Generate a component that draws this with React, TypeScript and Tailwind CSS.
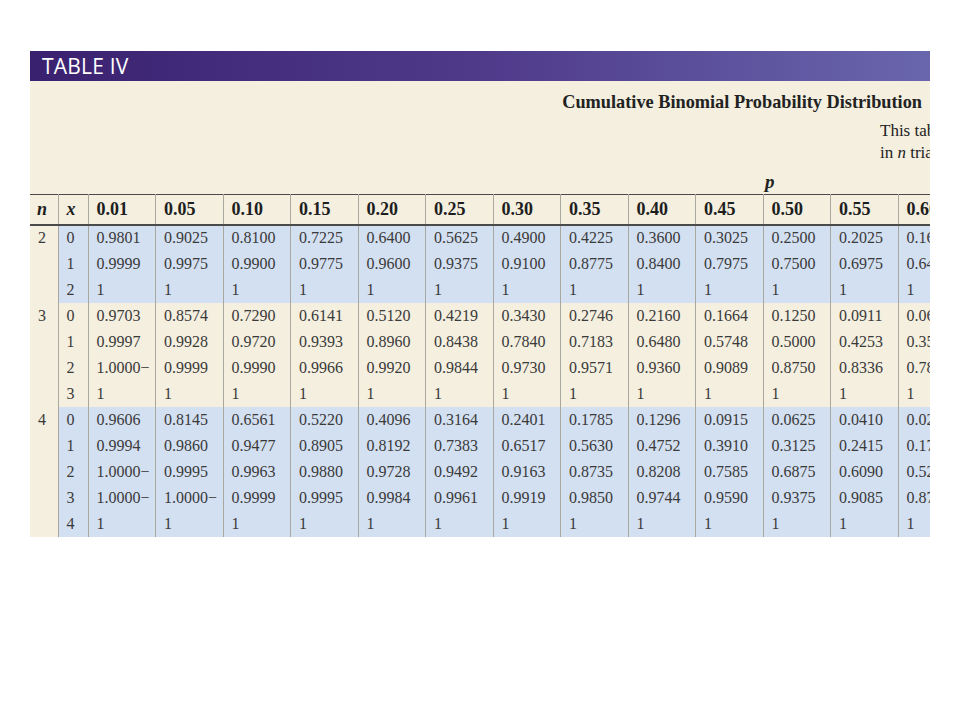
const P = ["0.01", "0.05", "0.10", "0.15", "0.20", "0.25", "0.30", "0.35", "0.40", "0.45", "0.50", "0.55", "0.60"];

type Group = { n: number; rows: string[][] };

const GROUPS: Group[] = [
  {
    n: 2,
    rows: [
      ["0.9801", "0.9025", "0.8100", "0.7225", "0.6400", "0.5625", "0.4900", "0.4225", "0.3600", "0.3025", "0.2500", "0.2025", "0.1600"],
      ["0.9999", "0.9975", "0.9900", "0.9775", "0.9600", "0.9375", "0.9100", "0.8775", "0.8400", "0.7975", "0.7500", "0.6975", "0.6400"],
      ["1", "1", "1", "1", "1", "1", "1", "1", "1", "1", "1", "1", "1"],
    ],
  },
  {
    n: 3,
    rows: [
      ["0.9703", "0.8574", "0.7290", "0.6141", "0.5120", "0.4219", "0.3430", "0.2746", "0.2160", "0.1664", "0.1250", "0.0911", "0.0640"],
      ["0.9997", "0.9928", "0.9720", "0.9393", "0.8960", "0.8438", "0.7840", "0.7183", "0.6480", "0.5748", "0.5000", "0.4253", "0.3520"],
      ["1.0000−", "0.9999", "0.9990", "0.9966", "0.9920", "0.9844", "0.9730", "0.9571", "0.9360", "0.9089", "0.8750", "0.8336", "0.7840"],
      ["1", "1", "1", "1", "1", "1", "1", "1", "1", "1", "1", "1", "1"],
    ],
  },
  {
    n: 4,
    rows: [
      ["0.9606", "0.8145", "0.6561", "0.5220", "0.4096", "0.3164", "0.2401", "0.1785", "0.1296", "0.0915", "0.0625", "0.0410", "0.0256"],
      ["0.9994", "0.9860", "0.9477", "0.8905", "0.8192", "0.7383", "0.6517", "0.5630", "0.4752", "0.3910", "0.3125", "0.2415", "0.1792"],
      ["1.0000−", "0.9995", "0.9963", "0.9880", "0.9728", "0.9492", "0.9163", "0.8735", "0.8208", "0.7585", "0.6875", "0.6090", "0.5248"],
      ["1.0000−", "1.0000−", "0.9999", "0.9995", "0.9984", "0.9961", "0.9919", "0.9850", "0.9744", "0.9590", "0.9375", "0.9085", "0.8704"],
      ["1", "1", "1", "1", "1", "1", "1", "1", "1", "1", "1", "1", "1"],
    ],
  },
];

const serif = { fontFamily: '"Liberation Serif", "Times New Roman", serif' };

export default function App() {
  return (
    <div className="w-[960px] h-[720px] bg-white pt-[51px] pl-[30px]">
      <div className="w-[900px] h-[486px] overflow-hidden bg-[#f4efdf]">
        {/* Header bar */}
        <div className="h-[30px] bg-gradient-to-r from-[#3a2170] via-[#4f3a8a] to-[#6966ad] flex items-center pl-[12px]">
          <span className="text-white text-[21px] leading-none tracking-[0.2px]" style={{ fontFamily: '"Open Sans", Lato, sans-serif' }}>
            TABLE IV
          </span>
        </div>

        {/* Title block */}
        <div className="h-[113px] relative text-[#222]" style={serif}>
          <div className="absolute right-[8px] top-[12px] text-[18.3px] font-bold leading-none whitespace-nowrap">
            Cumulative Binomial Probability Distribution
          </div>
          <div className="absolute left-[850px] top-[39px] text-[17px] leading-[22px] whitespace-nowrap">
            <div>This table gives</div>
            <div>
              in <span className="italic">n</span> trials
            </div>
          </div>
          <div className="absolute left-[735px] top-[91px] text-[19px] font-bold italic leading-none">p</div>
        </div>

        {/* Table */}
        <table className="table-fixed border-collapse text-[#3a3a3a]" style={{ ...serif, width: 935.5 }}>
          <colgroup>
            <col className="w-[28px]" />
            <col className="w-[30px]" />
            {P.map((p) => (
              <col key={p} className="w-[67.5px]" />
            ))}
          </colgroup>
          <thead>
            <tr className="h-[30px] border-t border-[#4a4a4a] border-b-2 border-b-[#4a4a4a] text-[#1e1e1e]">
              <th className="text-left pl-[7px] font-bold italic text-[18px] border-r border-[#a8a8a0]">n</th>
              <th className="text-left pl-[8px] font-bold italic text-[18px] border-r border-[#a8a8a0]">x</th>
              {P.map((p) => (
                <th key={p} className="text-left pl-[8px] font-bold text-[18px] border-r border-[#a8a8a0] whitespace-nowrap">
                  {p}
                </th>
              ))}
            </tr>
          </thead>
          <tbody>
            {GROUPS.map((g, gi) => {
              const bg = gi % 2 === 0 ? "bg-[#d3e0f1]" : "bg-[#f4efdf]";
              return g.rows.map((r, ri) => (
                <tr key={`${g.n}-${ri}`} className="h-[26px] text-[16px]">
                  <td className="pl-[8px] bg-[#f4efdf] border-r border-[#a8a8a0] align-middle">{ri === 0 ? g.n : ""}</td>
                  <td className={`pl-[8px] border-r border-[#a8a8a0] ${bg}`}>{ri}</td>
                  {r.map((v, ci) => (
                    <td key={ci} className={`pl-[8px] border-r border-[#a8a8a0] whitespace-nowrap ${bg}`}>
                      {v}
                    </td>
                  ))}
                </tr>
              ));
            })}
          </tbody>
        </table>
      </div>
    </div>
  );
}
